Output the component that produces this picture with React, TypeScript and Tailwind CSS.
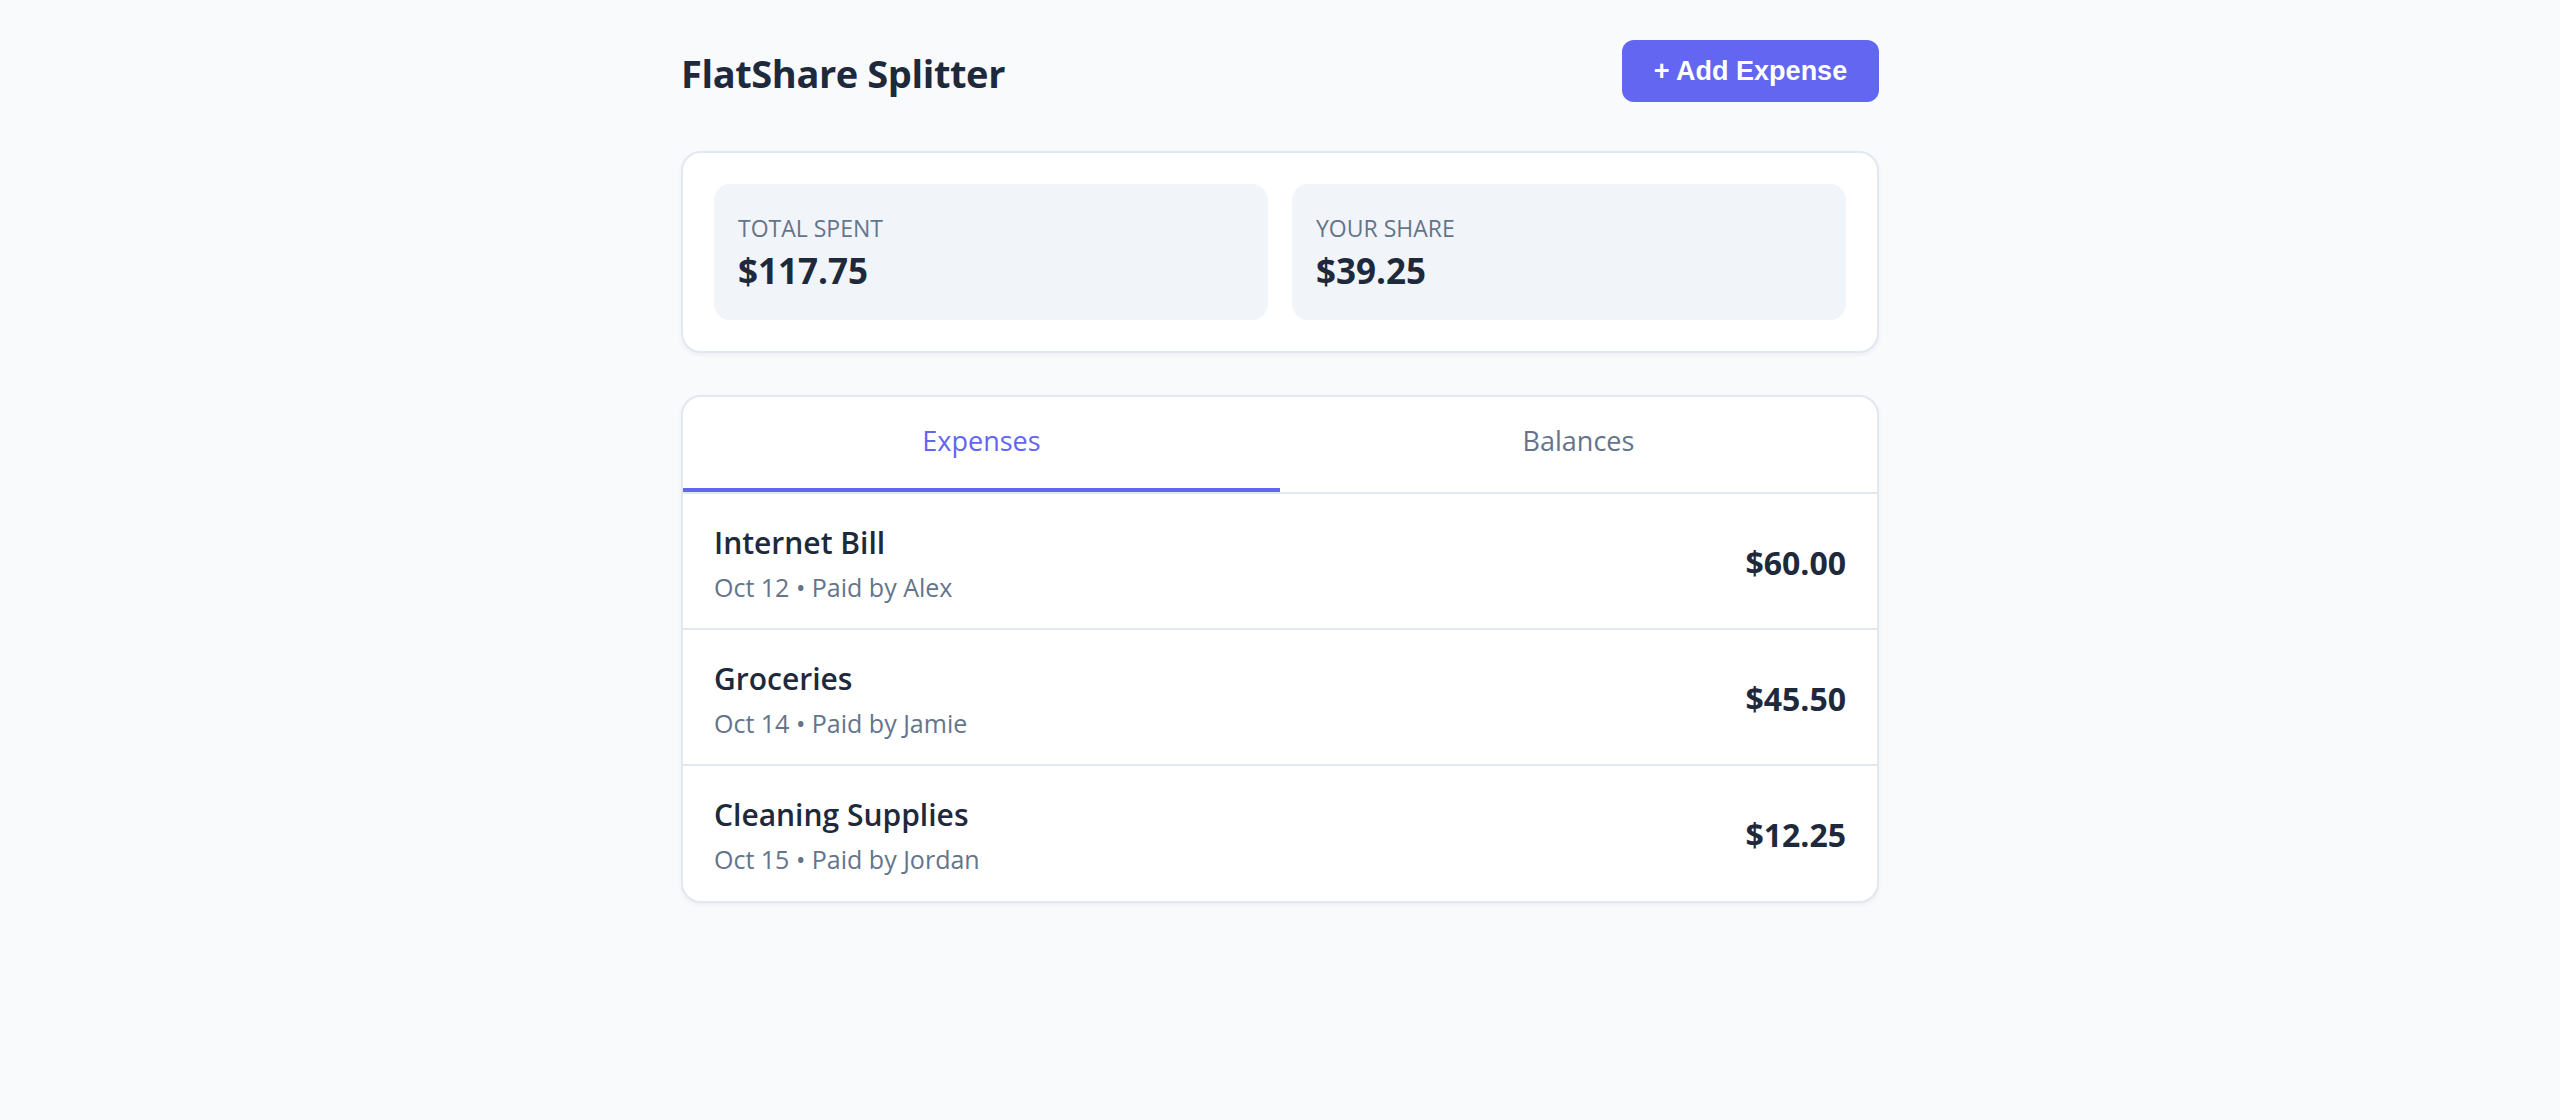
import React, { useState } from "react";

type Expense = { id: number; title: string; date: string; payer: string; amount: number };

const expenses: Expense[] = [
  { id: 1, title: "Internet Bill", date: "Oct 12", payer: "Alex", amount: 60 },
  { id: 2, title: "Groceries", date: "Oct 14", payer: "Jamie", amount: 45.5 },
  { id: 3, title: "Cleaning Supplies", date: "Oct 15", payer: "Jordan", amount: 12.25 },
];

function money(n: number) {
  return "$" + n.toFixed(2);
}

function StatBox({ label, value }: { label: string; value: string }) {
  return (
    <div className="flex h-[136px] flex-col justify-center rounded-[16px] bg-[#f1f5f9] px-[24px]">
      <div className="text-[23px] leading-[32px] uppercase text-[#64748b]">{label}</div>
      <div className="mt-[5px] text-[35px] font-bold leading-[44px] text-[#1e293b]">{value}</div>
    </div>
  );
}

export default function App() {
  const [tab, setTab] = useState<"expenses" | "balances">("expenses");
  const total = expenses.reduce((s, e) => s + e.amount, 0);
  const share = total / 3;

  return (
    <div className="min-h-screen bg-[#f8fafc] font-['Open_Sans',sans-serif] text-[#1e293b]">
      <div className="mx-auto w-[1198px] pt-[40px]">
        <header className="mb-[49px] flex h-[62px] items-center justify-between">
          <h1 className="pt-[3px] text-[38px] font-bold leading-[54px] tracking-[-0.4px] text-[#1e293b]">FlatShare Splitter</h1>
          <button className="h-[62px] w-[257px] rounded-[12px] bg-[#6366f1] font-['Liberation_Sans',Arial,sans-serif] text-[27px] font-bold text-white">
            + Add Expense
          </button>
        </header>

        <section className="grid grid-cols-2 gap-[24px] rounded-[20px] border-2 border-[#e2e8f0] bg-white p-[31px] shadow-[0_2px_5px_rgba(15,23,42,0.05)]">
          <StatBox label="Total Spent" value={money(total)} />
          <StatBox label="Your Share" value={money(share)} />
        </section>

        <section className="mt-[42px] overflow-hidden rounded-[20px] border-2 border-[#e2e8f0] bg-white shadow-[0_2px_5px_rgba(15,23,42,0.05)]">
          <div className="flex border-b-2 border-[#e2e8f0]">
            <button
              onClick={() => setTab("expenses")}
              className={
                tab === "expenses"
                  ? "h-[95px] flex-1 border-b-4 border-[#6366f1] pb-[3px] text-[27px] text-[#6366f1]"
                  : "h-[95px] flex-1 border-b-4 border-transparent pb-[3px] text-[27px] text-[#64748b]"
              }
            >
              Expenses
            </button>
            <button
              onClick={() => setTab("balances")}
              className={
                tab === "balances"
                  ? "h-[95px] flex-1 border-b-4 border-[#6366f1] pb-[3px] text-[27px] text-[#6366f1]"
                  : "h-[95px] flex-1 border-b-4 border-transparent pb-[3px] text-[27px] text-[#64748b]"
              }
            >
              Balances
            </button>
          </div>
          <ul>
            {expenses.map((e, i) => (
              <li
                key={e.id}
                className={
                  i < expenses.length - 1
                    ? "flex h-[136px] items-center justify-between border-b-2 border-[#e2e8f0] px-[31px] pt-[3px]"
                    : "flex h-[135px] items-center justify-between px-[31px] pt-[3px]"
                }
              >
                <div>
                  <div className="text-[30px] font-semibold leading-[40px] text-[#1e293b]">{e.title}</div>
                  <div className="mt-[8px] text-[25px] leading-[32px] text-[#64748b]">
                    {e.date} • Paid by {e.payer}
                  </div>
                </div>
                <div className="text-[32px] font-bold text-[#1e293b]">{money(e.amount)}</div>
              </li>
            ))}
          </ul>
        </section>
      </div>
    </div>
  );
}
